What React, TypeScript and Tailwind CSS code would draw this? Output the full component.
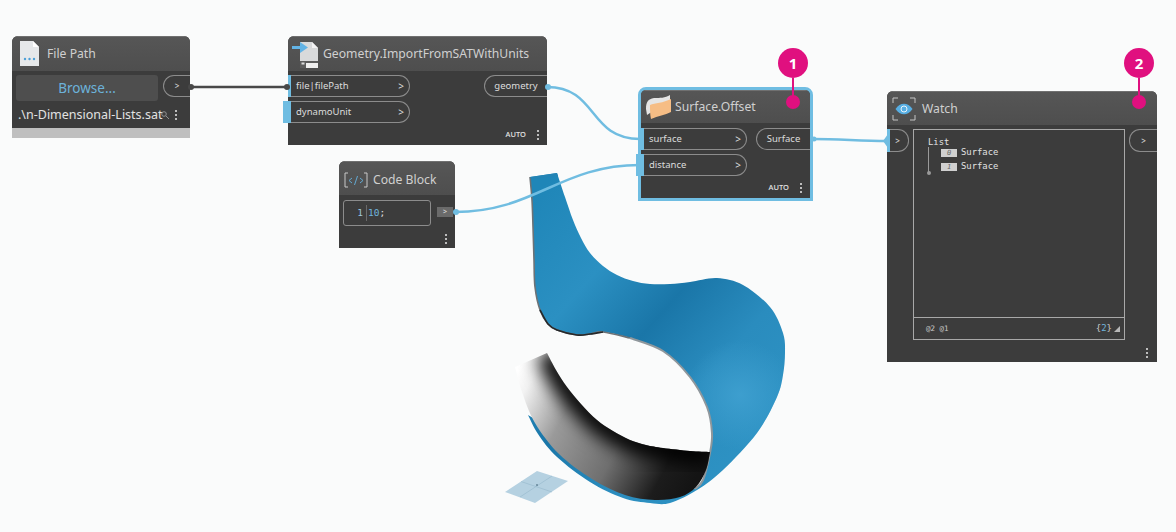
import React from "react";

const smooth = (pts: number[][], closed = false) => {
  const n = pts.length;
  const at = (i: number) => (closed ? pts[(i + n) % n] : pts[Math.max(0, Math.min(n - 1, i))]);
  let d = `M${pts[0][0]} ${pts[0][1]}`;
  const last = closed ? n : n - 1;
  for (let i = 0; i < last; i++) {
    const p0 = at(i - 1);
    const p1 = at(i);
    const p2 = at(i + 1);
    const p3 = at(i + 2);
    const c1x = p1[0] + (p2[0] - p0[0]) / 6;
    const c1y = p1[1] + (p2[1] - p0[1]) / 6;
    const c2x = p2[0] - (p3[0] - p1[0]) / 6;
    const c2y = p2[1] - (p3[1] - p1[1]) / 6;
    d += ` C${c1x.toFixed(1)} ${c1y.toFixed(1)} ${c2x.toFixed(1)} ${c2y.toFixed(1)} ${p2[0]} ${p2[1]}`;
  }
  return d;
};

const outer = [[557,173],[565,197],[573,220],[581,238],[590,253],[603,266],[617,275],[633,281],[650,284],[670,284],[690,282],[717,278],[743,285],[770,307],[783,333],[785,353],[783,375],[777,397],[757,433],[723,470],[697,490],[670,503],[650,503],[623,498],[590,482],[557,457],[538,434],[528,415]];
const innerLeft = [[530,177],[532,200],[533,227],[534,260],[535,287],[540,310],[548,324],[557,330],[577,335],[590,334],[603,332],[630,338],[663,351],[690,377],[707,407],[712,433],[710,453],[703,480],[695,489]];
const lowerEdge = innerLeft.slice(0, 12);
const darkEdge = innerLeft.slice(5, 11);
const upperRim = innerLeft.slice(11);
const bandTop = [[547,353],[556,370],[567,387],[581,404],[597,420],[613,431],[630,440],[646,445],[663,448],[690,451],[710,452]];
const bandBottom = [[710,452],[706,470],[696,487],[680,497],[655,500],[625,495],[592,479],[559,454],[535,423],[522,392],[515,367]];

const blueD = `${smooth(outer)} L528 415 L620 470 L695 489 ${smooth([...innerLeft].reverse()).replace(/^M[^C]*/, "L695 489 ")} Z`;
const bandD = `M515 367 ${smooth(bandTop).replace(/^M/, "L")} ${smooth(bandBottom).replace(/^M[^C]*/, "")} Z`;

const Dots = ({ className = "" }: { className?: string }) => (
  <div className={`flex flex-col gap-[2px] ${className}`}>
    <span className="w-[2px] h-[2px] bg-[#bdbdbd]" />
    <span className="w-[2px] h-[2px] bg-[#bdbdbd]" />
    <span className="w-[2px] h-[2px] bg-[#bdbdbd]" />
  </div>
);

const InPort = ({ label, wide, w }: { label: string; wide?: boolean; w: string }) => (
  <div className={`relative flex items-center justify-between h-[22px] ${w} pl-[8px] pr-[5px] border border-l-0 border-[#8c8c8c] rounded-r-[11px] text-[#dcdcdc] text-[9.5px]`}>
    <span>{label}</span>
    <span className="text-[10px]">&gt;</span>
    <span className={`absolute top-[-1px] h-[22px] bg-[#6fbde2] ${wide ? "left-[-5px] w-[8px]" : "left-0 w-[3px]"}`} />
  </div>
);

const OutPort = ({ label, w }: { label: string; w: string }) => (
  <div className={`flex items-center justify-center h-[22px] ${w} border border-r-0 border-[#8c8c8c] rounded-l-[11px] text-[#dcdcdc] text-[9.5px]`}>
    {label}
  </div>
);

const Auto = () => (
  <div className="flex items-center justify-end gap-[11px] pr-[8px] h-[20px] text-[#e4e4e4] text-[7.5px] font-medium">
    <span>AUTO</span>
    <Dots />
  </div>
);

const Header = ({ title, h, icon, pl }: { title: string; h: string; icon: React.ReactNode; pl: string }) => (
  <div className={`flex items-center shrink-0 ${h} ${pl} bg-gradient-to-b from-[#565656] to-[#4e4e4e] border-t border-[#707070] text-[#d0d0d0] text-[12.2px] whitespace-nowrap`}>
    {icon}
    <span>{title}</span>
  </div>
);

const wires = (
  <svg className="absolute inset-0" width="1176" height="532" viewBox="0 0 1176 532" fill="none">
    <defs>
      <linearGradient id="blueBase" gradientUnits="userSpaceOnUse" x1="530" y1="200" x2="790" y2="430">
        <stop offset="0" stopColor="#1f86b8" />
        <stop offset="0.28" stopColor="#2b90c2" />
        <stop offset="0.5" stopColor="#1a76a8" />
        <stop offset="0.72" stopColor="#2a8cbe" />
        <stop offset="1" stopColor="#2e93c4" />
      </linearGradient>
      <radialGradient id="blueGlow" gradientUnits="userSpaceOnUse" cx="740" cy="395" r="55">
        <stop offset="0" stopColor="#3fa0d0" stopOpacity="0.9" />
        <stop offset="1" stopColor="#3fa0d0" stopOpacity="0" />
      </radialGradient>
      <linearGradient id="band" gradientUnits="userSpaceOnUse" x1="516" y1="372" x2="700" y2="470">
        <stop offset="0" stopColor="#ffffff" />
        <stop offset="0.08" stopColor="#f2f2f2" />
        <stop offset="0.3" stopColor="#9a9a9a" />
        <stop offset="0.6" stopColor="#6f6f6f" />
        <stop offset="0.85" stopColor="#1c1c1c" />
        <stop offset="1" stopColor="#141414" />
      </linearGradient>
      <filter id="soft" x="-20%" y="-20%" width="140%" height="140%">
        <feGaussianBlur stdDeviation="9" />
      </filter>
      <clipPath id="bandClip">
        <path d={bandD} />
      </clipPath>
    </defs>

    <path d={blueD} fill="url(#blueBase)" />
    <path d={blueD} fill="url(#blueGlow)" />
    <path d={smooth(lowerEdge)} stroke="#6d7276" strokeWidth="1.6" />
    <path d={smooth(darkEdge)} stroke="#26282a" strokeWidth="1.6" />
    <path d="M530 177 L557 173 L558 176 L531 179 Z" fill="#2384b5" />
    <path d={smooth(upperRim)} stroke="#8f979c" strokeWidth="2" />
    <path d={bandD} fill="url(#band)" />
    <g clipPath="url(#bandClip)">
      <path d={smooth(bandTop)} stroke="#000000" strokeWidth="24" filter="url(#soft)" />
    </g>

    {/* ground grid */}
    <path d="M505 492 L537 471 L568 481 L535 503 Z" fill="#b5d1e1" />
    <path d="M521 481.5 L552 492 M552 476 L520 497" stroke="#8fb2c6" strokeWidth="0.5" />
    <circle cx="537" cy="485" r="0.8" fill="#34566a" />

    {/* wires */}
    <path d="M190 87 L288 87" stroke="#484848" strokeWidth="2.5" />
    <path d="M547 87 C598 87 588 139 640 139" stroke="#70bde1" strokeWidth="2.5" />
    <path d="M455 212 C535 212 560 165 640 165" stroke="#70bde1" strokeWidth="2.5" />
    <path d="M813 139 C840 139 860 141 887 141" stroke="#70bde1" strokeWidth="2.5" />
  </svg>
);

const Badge = ({ n, className }: { n: string; className: string }) => (
  <div className={`absolute flex flex-col items-center w-[30px] ${className}`}>
    <div className="flex items-center justify-center w-[30px] h-[30px] rounded-full bg-[#e0107f] text-white text-[15px] font-bold">{n}</div>
    <div className="w-[2px] h-[19px] bg-[#e0107f]" />
    <div className="w-[14px] h-[14px] mt-[-2px] rounded-full bg-[#e0107f]" />
  </div>
);

export default function App() {
  return (
    <div className="relative w-[1176px] h-[532px] overflow-hidden bg-[#fafbfb] font-['Noto_Sans','Open_Sans',sans-serif]">
      {wires}

      {/* File Path */}
      <div className="absolute left-[12px] top-[36px] w-[178px] rounded-t-[6px] overflow-hidden bg-[#3c3c3c] flex flex-col">
        <Header
          title="File Path"
          h="h-[35px]"
          pl="pl-[8px]"
          icon={
            <svg width="20" height="26" viewBox="0 0 20 26" className="mr-[7px] shrink-0">
              <path d="M0 0 H13 L19 6 V25 H0 Z" fill="#e6e8ea" />
              <path d="M13 0 L19 6 H13 Z" fill="#ffffff" />
              <circle cx="5" cy="18" r="1.2" fill="#4b9fd8" />
              <circle cx="9.5" cy="18" r="1.2" fill="#4b9fd8" />
              <circle cx="14" cy="18" r="1.2" fill="#4b9fd8" />
            </svg>
          }
        />
        <div className="flex items-start gap-[5px] pl-[4px] pt-[4px] h-[31px]">
          <div className="flex items-center justify-center w-[142px] h-[26px] rounded-[3px] bg-[#4e4e4e] text-[#6cb2da] text-[13.5px]">Browse...</div>
          <div className="flex items-center justify-center w-[27px] h-[22px] border border-r-0 border-[#8c8c8c] rounded-l-[11px] text-[#e0e0e0] text-[8px]">&gt;</div>
        </div>
        <div className="flex items-center h-[26px] pl-[6px] pr-[8px] text-[#e2e2e2] text-[12.5px]">
          <span className="whitespace-nowrap">.\n-Dimensional-Lists.sat</span>
          <svg width="8" height="8" viewBox="0 0 8 8" fill="none" stroke="#9a9a9a" strokeWidth="0.9" className="shrink-0 ml-[-1px] mr-[6px]">
            <circle cx="3" cy="3" r="2.3" />
            <path d="M5 5 L8 8" />
          </svg>
          <Dots className="shrink-0" />
        </div>
        <div className="h-[10px] bg-[#bfbfbf]" />
      </div>

      {/* Import */}
      <div className="absolute left-[288px] top-[36px] w-[259px] h-[109px] rounded-t-[6px] bg-[#3c3c3c] flex flex-col">
        <div className="rounded-t-[6px] overflow-hidden">
          <Header
            title="Geometry.ImportFromSATWithUnits"
            h="h-[35px]"
            pl="pl-[4px]"
            icon={
              <svg width="27" height="27" viewBox="0 0 27 27" className="mr-[4px] shrink-0">
                <path d="M8 1 H20 L26 7 V26 H8 Z" fill="#d9dadb" />
                <path d="M20 1 L26 7 H20 Z" fill="#f4f4f4" />
                <path d="M0 5 H8 V1 L16 6.5 L8 12 V8 H0 Z" fill="#63b4e6" />
                <rect x="8" y="20" width="18" height="7" fill="#5c5c5c" />
                <rect x="14" y="22" width="12" height="5" fill="#efefef" />
                <rect x="9.5" y="21.5" width="3" height="2" fill="#dcdcdc" />
              </svg>
            }
          />
        </div>
        <div className="relative flex justify-between pt-[4px] flex-1">
          <div className="flex flex-col gap-[4px]">
            <InPort label="file|filePath" w="w-[122px]" />
            <InPort label="dynamoUnit" w="w-[122px]" wide />
          </div>
          <OutPort label="geometry" w="w-[63px]" />
        </div>
        <Auto />
      </div>

      {/* Code Block */}
      <div className="absolute left-[339px] top-[161px] w-[116px] h-[87px] rounded-t-[6px] overflow-hidden bg-[#3c3c3c] flex flex-col">
        <Header
          title="Code Block"
          h="h-[34px] pt-[3px]"
          pl="pl-[5px]"
          icon={
            <svg width="24" height="16" viewBox="0 0 24 16" fill="none" stroke="#63a9d2" strokeWidth="1" className="mr-[5px] shrink-0">
              <path d="M4 1 H1 V15 H4 M20 1 H23 V15 H20" stroke="#c8c8c8" />
              <path d="M8 6 L5 8.5 L8 11 M16 6 L19 8.5 L16 11 M13.5 4 L10.5 13" />
            </svg>
          }
        />
        <div className="flex items-start gap-[6px] pl-[4px] pt-[5px] flex-1">
          <div className="flex items-center w-[88px] h-[26px] rounded-[3px] border border-[#8c8c8c] font-['DejaVu_Sans_Mono',monospace] text-[9.5px]">
            <span className="w-[22px] pr-[3px] text-right text-[#9ec7dd]">1</span>
            <span className="h-[16px] border-l border-[#6a6a6a] pl-[1px] text-[#6fb4dd] leading-[16px]">10<span className="text-[#e0e0e0]">;</span></span>
          </div>
          <div className="flex items-center justify-center mt-[7px] w-[16px] h-[10px] bg-[#6a6a6a] text-[#e0e0e0] text-[7px]">&gt;</div>
        </div>
        <Dots className="self-end mr-[8px] mb-[4px]" />
      </div>

      {/* Surface.Offset */}
      <div className="absolute left-[638px] top-[87px] w-[175px] h-[114px] rounded-t-[8px] border-[3px] border-[#6fbde2] bg-[#3c3c3c] flex flex-col">
        <div className="rounded-t-[5px] overflow-hidden">
          <Header
            title="Surface.Offset"
            h="h-[33px]"
            pl="pl-[5px]"
            icon={
              <svg width="26" height="24" viewBox="0 0 26 24" className="mr-[3px] shrink-0">
                <path d="M0 14 C0 7 2 4 8 3 C14 3 19 3 24 0 V6 L4 18 L1 20 Z" fill="#e5e5e5" />
                <path d="M4 10 C9 8 17 8 25 4 V17 C19 20 12 21 5 24 C4 20 4 15 4 10 Z" fill="#f6bd85" />
              </svg>
            }
          />
        </div>
        <div className="relative flex justify-between pt-[5px] flex-1">
          <div className="flex flex-col gap-[4px]">
            <InPort label="surface" w="w-[106px]" />
            <InPort label="distance" w="w-[106px]" wide />
          </div>
          <OutPort label="Surface" w="w-[54px]" />
        </div>
        <Auto />
      </div>

      {/* Watch */}
      <div className="absolute left-[887px] top-[91px] w-[270px] h-[271px] rounded-t-[6px] overflow-hidden bg-[#3c3c3c] flex flex-col">
        <Header
          title="Watch"
          h="h-[34px] pt-[1px]"
          pl="pl-[5px]"
          icon={
            <svg width="24" height="24" viewBox="0 0 24 24" fill="none" className="mr-[6px] shrink-0">
              <path d="M1 6 V1 H6 M18 1 H23 V6 M1 18 V23 H6 M18 23 H23 V18" stroke="#c4c4c4" strokeWidth="1" />
              <path d="M3.5 12 C8 5 16 5 20.5 12 C16 19 8 19 3.5 12 Z" fill="#57aee3" />
              <circle cx="12" cy="12" r="3" fill="none" stroke="#e8f4fb" strokeWidth="1" />
            </svg>
          }
        />
        <div className="flex items-start flex-1 pt-[4px]">
          <div className="relative flex items-center justify-center w-[22px] h-[23px] border border-l-0 border-[#8c8c8c] rounded-r-[11px] text-[#e0e0e0] text-[8px]">
            &gt;
            <span className="absolute left-0 top-[-1px] w-[3px] h-[23px] bg-[#6fbde2]" />
          </div>
          <div className="ml-[4px] w-[212px] h-[211px] border border-[#a8a8a8] flex flex-col font-['DejaVu_Sans_Mono',monospace] text-[8.9px] text-[#e2e2e2]">
            <div className="relative flex-1 pl-[14px] pt-[7px]">
              <div className="leading-[10px]">List</div>
              <div className="absolute left-[14px] top-[17px] w-px h-[26px] bg-[#9a9a9a]" />
              <div className="absolute left-[12.5px] top-[41px] w-[4px] h-[4px] rounded-full bg-[#9a9a9a]" />
              <div className="flex flex-col gap-[4px] pl-[13px] pt-[1px]">
                <div className="flex items-center gap-[4px] h-[10px]">
                  <span className="flex justify-center w-[16px] h-[8px] bg-[#d0d0d0] text-[#666] text-[7px] leading-[8px] italic">0</span>
                  <span>Surface</span>
                </div>
                <div className="flex items-center gap-[4px] h-[10px]">
                  <span className="flex justify-center w-[16px] h-[8px] bg-[#d0d0d0] text-[#666] text-[7px] leading-[8px] italic">1</span>
                  <span>Surface</span>
                </div>
              </div>
            </div>
            <div className="flex items-center justify-between h-[22px] pl-[12px] pr-[4px] border-t border-[#a8a8a8] text-[7.5px] text-[#c8c8c8]">
              <span>@2 @1</span>
              <span className="flex items-center gap-[2px] text-[9px]">
                <span>{"{"}<span className="text-[#6fb4dd]">2</span>{"}"}</span>
                <svg width="6" height="6" viewBox="0 0 6 6"><path d="M6 0 V6 H0 Z" fill="#b8b8b8" /></svg>
              </span>
            </div>
          </div>
          <div className="ml-[4px] flex items-center justify-center w-[28px] h-[23px] border border-r-0 border-[#8c8c8c] rounded-l-[11px] text-[#e0e0e0] text-[8px]">&gt;</div>
        </div>
        <Dots className="self-end mr-[9px] mb-[4px]" />
      </div>

      {/* wire end connectors over the nodes */}
      <svg className="absolute inset-0 pointer-events-none" width="1176" height="532" viewBox="0 0 1176 532">
        <circle cx="191" cy="87" r="3" fill="#484848" />
        <circle cx="287" cy="87" r="3" fill="#484848" />
        <circle cx="548" cy="87" r="3" fill="#70bde1" />
        <circle cx="456" cy="212" r="3" fill="#70bde1" />
        <circle cx="814" cy="139" r="2.5" fill="#70bde1" />
        <path d="M883 141 L888 134 V148 Z" fill="#70bde1" />
      </svg>

      <Badge n="1" className="left-[778px] top-[48px]" />
      <Badge n="2" className="left-[1124px] top-[48px]" />
    </div>
  );
}
